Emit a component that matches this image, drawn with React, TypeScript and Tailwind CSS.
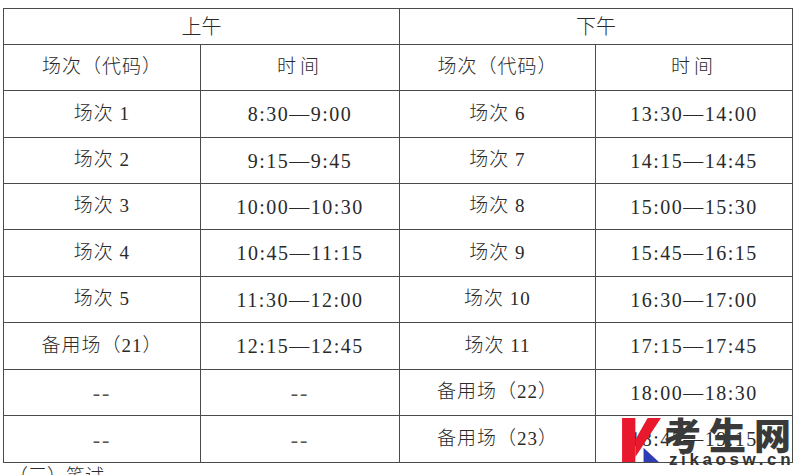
import React from 'react';

const zh = { fontFamily: '"Liberation Serif", "Noto Sans CJK SC", serif' };

// Exam session schedule: morning (left) and afternoon (right)
const rows = [
  ['场次 1', '8:30—9:00', '场次 6', '13:30—14:00'],
  ['场次 2', '9:15—9:45', '场次 7', '14:15—14:45'],
  ['场次 3', '10:00—10:30', '场次 8', '15:00—15:30'],
  ['场次 4', '10:45—11:15', '场次 9', '15:45—16:15'],
  ['场次 5', '11:30—12:00', '场次 10', '16:30—17:00'],
  ['备用场（21）', '12:15—12:45', '场次 11', '17:15—17:45'],
  ['--', '--', '备用场（22）', '18:00—18:30'],
  ['--', '--', '备用场（23）', '18:45—19:15'],
];

const cell = 'border-r border-b border-[#4a4a4a] flex items-center justify-center whitespace-pre';

const Watermark: React.FC = () => (
  <div className="absolute left-[619px] top-[410px] flex items-start pointer-events-none whitespace-nowrap">
    <svg width="39" height="44" viewBox="0 0 38 43" className="shrink-0">
      <rect x="0" y="0" width="13" height="43" fill="#e8192c" />
      <polygon points="13,21 25,0 38,0 13,38" fill="#e8192c" />
      <polygon points="21,29 21,43 36,43" fill="#2f3db5" />
    </svg>
    <div className="flex flex-col ml-[3px]">
      <div
        className="text-[37px] font-black leading-[36px] tracking-[8px] text-[#3a3a3a] -mt-[2px]"
        style={{ fontFamily: '"Noto Sans CJK SC", sans-serif' }}
      >
        考生网
      </div>
      <div
        className="text-[17px] font-semibold leading-[14px] tracking-[3.6px] text-[#333] ml-[5px] mt-[1px]"
        style={{ fontFamily: '"Liberation Sans", sans-serif' }}
      >
        zikaosw.cn
      </div>
    </div>
  </div>
);

export default function App() {
  return (
    <div className="w-[803px] h-[475px] bg-white text-[#2a2a2a] overflow-hidden font-light" style={zh}>
      <div className="pt-[8px] pl-[3px]">
        <div className="relative w-[790px]">
          <div className="grid grid-cols-[197px_199px_196px_197px] grid-rows-[36px_46px_47px_46px_46px_47px_46px_47px_46px_47px] border-l border-t border-[#4a4a4a]">
            <div className={`${cell} col-span-2 text-[20px]`}>上午</div>
            <div className={`${cell} col-span-2 text-[20px]`}>下午</div>
            <div className={`${cell} text-[19px] tracking-[1px]`}>场次（代码）</div>
            <div className={`${cell} text-[19px] tracking-[4px]`}>时间</div>
            <div className={`${cell} text-[19px] tracking-[1px]`}>场次（代码）</div>
            <div className={`${cell} text-[19px] tracking-[4px]`}>时间</div>
            {rows.map((r, i) =>
              r.map((t, j) => (
                <div
                  key={`${i}-${j}`}
                  className={`${cell} ${
                    t === '--'
                      ? 'text-[22px] tracking-[2px] text-[#555]'
                      : j % 2 === 1
                      ? 'text-[20px] tracking-[1.5px]'
                      : 'text-[19px] tracking-[1px]'
                  }`}
                >
                  {t}
                </div>
              ))
            )}
          </div>
          <Watermark />
        </div>
        <div className="pl-[6px] pt-[2px] text-[19px] leading-[24px]">（三）笔试</div>
      </div>
    </div>
  );
}
